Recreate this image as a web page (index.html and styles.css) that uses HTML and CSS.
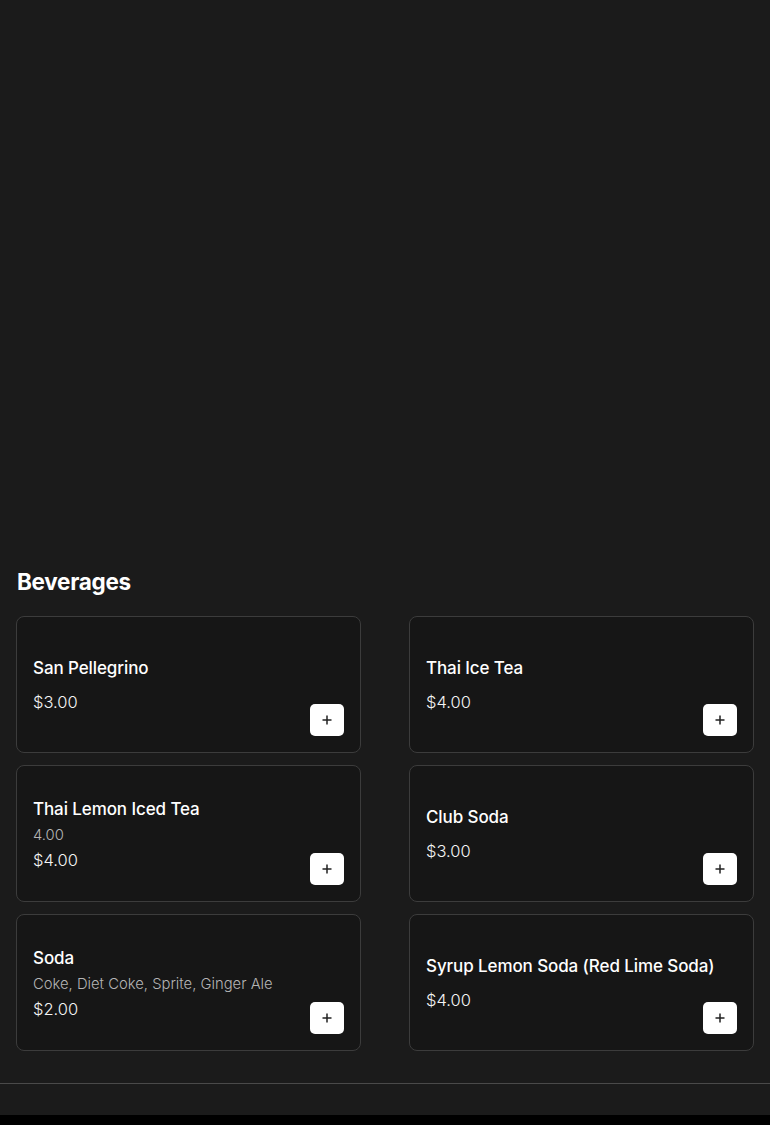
FILE: index.html
```html
<!DOCTYPE html>
<html>
<head>
<meta charset="utf-8">
<link rel="stylesheet" href="styles.css">
</head>
<body>
<div class="hero"></div>
<section class="menu">
  <h2 class="section-title">Beverages</h2>
  <div class="grid">
    <div class="card">
      <div class="title">San Pellegrino</div>
      <div class="price">$3.00</div>
      <button class="add"><svg width="10" height="10" viewBox="0 0 10 10"><path d="M5 0.5V9.5M0.5 5H9.5" stroke="#222" stroke-width="1.5"/></svg></button>
    </div>
    <div class="card">
      <div class="title">Thai Ice Tea</div>
      <div class="price">$4.00</div>
      <button class="add"><svg width="10" height="10" viewBox="0 0 10 10"><path d="M5 0.5V9.5M0.5 5H9.5" stroke="#222" stroke-width="1.5"/></svg></button>
    </div>
    <div class="card">
      <div class="title">Thai Lemon Iced Tea</div>
      <div class="desc">4.00</div>
      <div class="price">$4.00</div>
      <button class="add"><svg width="10" height="10" viewBox="0 0 10 10"><path d="M5 0.5V9.5M0.5 5H9.5" stroke="#222" stroke-width="1.5"/></svg></button>
    </div>
    <div class="card">
      <div class="title">Club Soda</div>
      <div class="price">$3.00</div>
      <button class="add"><svg width="10" height="10" viewBox="0 0 10 10"><path d="M5 0.5V9.5M0.5 5H9.5" stroke="#222" stroke-width="1.5"/></svg></button>
    </div>
    <div class="card">
      <div class="title">Soda</div>
      <div class="desc">Coke, Diet Coke, Sprite, Ginger Ale</div>
      <div class="price">$2.00</div>
      <button class="add"><svg width="10" height="10" viewBox="0 0 10 10"><path d="M5 0.5V9.5M0.5 5H9.5" stroke="#222" stroke-width="1.5"/></svg></button>
    </div>
    <div class="card">
      <div class="title">Syrup Lemon Soda (Red Lime Soda)</div>
      <div class="price">$4.00</div>
      <button class="add"><svg width="10" height="10" viewBox="0 0 10 10"><path d="M5 0.5V9.5M0.5 5H9.5" stroke="#222" stroke-width="1.5"/></svg></button>
    </div>
  </div>
</section>
<div class="divider"></div>
<footer class="footer"></footer>
</body>
</html>
```

FILE: styles.css
```css
html, body {
  margin: 0;
  padding: 0;
  background: #1b1b1b;
  color: #ffffff;
  font-family: "Inter", "Noto Sans", sans-serif;
}
.hero {
  height: 567px;
}
.menu {
  padding: 0 16px 32px;
}
.section-title {
  margin: 0 0 0 1px;
  font-size: 22.5px;
  line-height: 30px;
  font-weight: 700;
  letter-spacing: -0.3px;
}
.grid {
  margin-top: 19px;
  display: grid;
  grid-template-columns: 1fr 1fr;
  column-gap: 48px;
  row-gap: 12px;
}
.card {
  position: relative;
  box-sizing: border-box;
  min-height: 137px;
  background: #161616;
  border: 1px solid #3c3c3c;
  border-radius: 8px;
  padding: 0 16px;
  display: flex;
  flex-direction: column;
  justify-content: center;
}
.title {
  font-size: 17px;
  line-height: 26px;
  font-weight: 500;
  letter-spacing: -0.1px;
}
.desc {
  margin-top: 2px;
  font-size: 14.8px;
  line-height: 22px;
  font-weight: 300;
  color: #b4b4b4;
}
.price {
  font-size: 16.5px;
  line-height: 24px;
  font-weight: 300;
  color: #f4f4f4;
}
.title + .price {
  margin-top: 9px;
}
.desc + .price {
  margin-top: 2px;
}
.add {
  position: absolute;
  right: 16px;
  bottom: 16px;
  width: 34px;
  height: 32px;
  padding: 0;
  border: none;
  border-radius: 5px;
  background: #ffffff;
  display: flex;
  align-items: center;
  justify-content: center;
}
.divider {
  border-top: 1px solid #4a4a4a;
  height: 31px;
}
.footer {
  background: #000000;
  height: 60px;
}
```
